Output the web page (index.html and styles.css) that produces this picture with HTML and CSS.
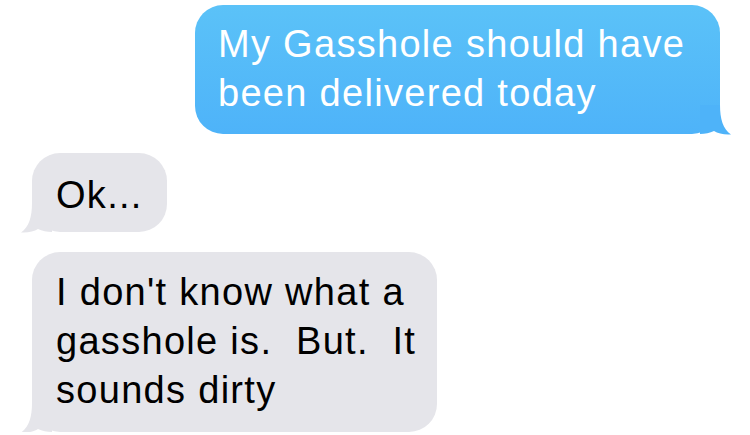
FILE: index.html
```html
<!DOCTYPE html>
<html>
<head>
	<meta charset="utf-8">
	<title>Mensajes</title>
	<link rel="stylesheet" href="styles.css">
</head>
<body>
	<main class="chat">
		<div class="burbuja enviado">
			My Gasshole should have<br>been delivered today
			<svg class="cola" viewBox="0 0 32 30" width="32" height="30"><path d="M20 0 C20 14 23 24 31 29.5 C24 30 18 28.5 14 26 C10 28 5 29 0 29 L0 0 Z"/></svg>
		</div>
		<div class="burbuja recibido corto">
			Ok...
			<svg class="cola" viewBox="0 0 32 30" width="32" height="30"><path d="M20 0 C20 14 23 24 31 29.5 C24 30 18 28.5 14 26 C10 28 5 29 0 29 L0 0 Z"/></svg>
		</div>
		<div class="burbuja recibido largo">
			I don't know what a<br>gasshole is.&nbsp; But.&nbsp; It<br>sounds dirty
			<svg class="cola" viewBox="0 0 32 30" width="32" height="30"><path d="M20 0 C20 14 23 24 31 29.5 C24 30 18 28.5 14 26 C10 28 5 29 0 29 L0 0 Z"/></svg>
		</div>
	</main>
</body>
</html>
```

FILE: styles.css
```css
body{
	margin: 0;
	background: #fff;
	font-family: "Liberation Sans", Arial, sans-serif;
}

/*--------Contenedor-----------*/
.chat{
	display: flex;
	flex-direction: column;
	padding-top: 5px;
}

/*--------Burbujas-----------*/
.burbuja{
	position: relative;
	box-sizing: border-box;
	font-size: 38px;
	line-height: 49px;
	letter-spacing: 1.3px;
	border-radius: 28px;
	white-space: nowrap;
}
.enviado{
	align-self: flex-end;
	margin-right: 30px;
	width: 525px;
	padding: 15px 20px 16px 23px;
	color: #fff;
	background: linear-gradient(#5bc2f8, #4eb3f9);
}
.recibido{
	align-self: flex-start;
	margin-left: 32px;
	color: #000;
	background: #e5e5ea;
}
.corto{
	margin-top: 19px;
	width: 135px;
	padding: 18px 10px 12px 24px;
}
.largo{
	margin-top: 20px;
	width: 405px;
	padding: 16px 10px 17px 24px;
}

/*--------Cola-----------*/
.cola{
	position: absolute;
	bottom: -1px;
	display: block;
}
.enviado .cola{
	right: -12px;
	fill: #4eb3f9;
}
.recibido .cola{
	left: -12px;
	fill: #e5e5ea;
	transform: scaleX(-1);
}
```
